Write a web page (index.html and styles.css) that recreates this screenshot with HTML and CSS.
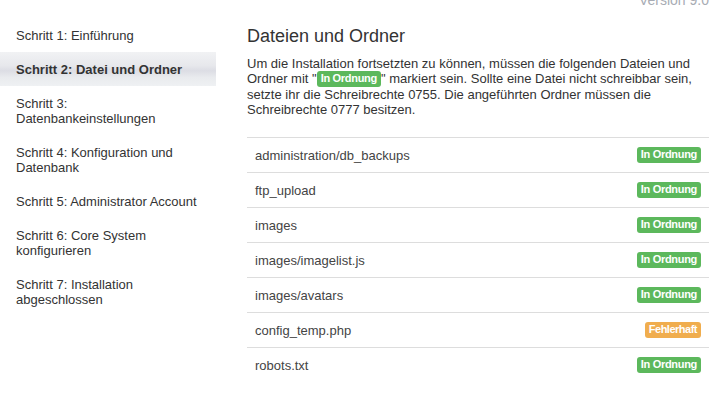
FILE: index.html
```html
<!DOCTYPE html>
<html lang="de">
<head>
    <meta charset="UTF-8">
    <title>Installation - Dateien und Ordner</title>
    <link rel="stylesheet" href="styles.css">
</head>
<body>
    <div class="page">
        <ul class="steps">
            <li>Schritt 1: Einführung</li>
            <li class="active">Schritt 2: Datei und Ordner</li>
            <li>Schritt 3: Datenbankeinstellungen</li>
            <li>Schritt 4: Konfiguration und Datenbank</li>
            <li>Schritt 5: Administrator Account</li>
            <li>Schritt 6: Core System konfigurieren</li>
            <li>Schritt 7: Installation abgeschlossen</li>
        </ul>
        <div class="main">
            <div class="version">Version 9.0</div>
            <h2>Dateien und Ordner</h2>
            <p class="intro">Um die Installation fortsetzten zu können, müssen die folgenden Dateien und Ordner mit "<span class="label label-ok">In Ordnung</span>" markiert sein. Sollte eine Datei nicht schreibbar sein, setzte ihr die Schreibrechte 0755. Die angeführten Ordner müssen die Schreibrechte 0777 besitzen.</p>
            <div class="files">
                <div class="file-row"><span>administration/db_backups</span><span class="label label-ok">In Ordnung</span></div>
                <div class="file-row"><span>ftp_upload</span><span class="label label-ok">In Ordnung</span></div>
                <div class="file-row"><span>images</span><span class="label label-ok">In Ordnung</span></div>
                <div class="file-row"><span>images/imagelist.js</span><span class="label label-ok">In Ordnung</span></div>
                <div class="file-row"><span>images/avatars</span><span class="label label-ok">In Ordnung</span></div>
                <div class="file-row"><span>config_temp.php</span><span class="label label-fail">Fehlerhaft</span></div>
                <div class="file-row"><span>robots.txt</span><span class="label label-ok">In Ordnung</span></div>
            </div>
        </div>
    </div>
</body>
</html>
```

FILE: styles.css
```css
body {
    margin: 0;
    font-family: "Liberation Sans", Arial, sans-serif;
    font-size: 13px;
    line-height: 15px;
    color: #333;
    background-color: white;
}
.page {
    display: flex;
    align-items: flex-start;
}
.steps {
    list-style: none;
    margin: 0;
    padding: 18px 0 0 0;
    width: 216px;
    flex: none;
}
.steps li {
    padding: 10px 8px 9px 16px;
    color: #333;
}
.steps li.active {
    font-weight: bold;
    background: linear-gradient(to bottom, #f1f2f4 0%, #e7e8ec 40%, #dcdde4 55%, #e9ebee 75%, #eff1f3 100%);
}
.main {
    width: 462px;
    margin-left: 31px;
}
.version {
    margin-top: -8px;
    text-align: right;
    color: #a8acb4;
    font-size: 14px;
    line-height: 16px;
}
.main h2 {
    margin: 18px 0 0 0;
    font-size: 18px;
    font-weight: normal;
    line-height: 21px;
    color: #333;
}
.intro {
    margin: 9px 0 20px 0;
}
.label {
    display: inline-block;
    font-size: 11px;
    font-weight: bold;
    line-height: 11px;
    padding: 2px 4px 3px;
    color: white;
    border-radius: 3px;
    white-space: nowrap;
}
.label-ok {
    background-color: #5cb85c;
    letter-spacing: -0.3px;
}
.label-fail {
    background-color: #f0ad4e;
    letter-spacing: -0.5px;
}
.intro .label {
    vertical-align: 1px;
}
.files {
    display: flex;
    flex-direction: column;
}
.file-row {
    display: flex;
    justify-content: space-between;
    align-items: center;
    height: 34px;
    padding: 0 8px;
    border-top: 1px solid #ddd;
    color: #444;
}
```
